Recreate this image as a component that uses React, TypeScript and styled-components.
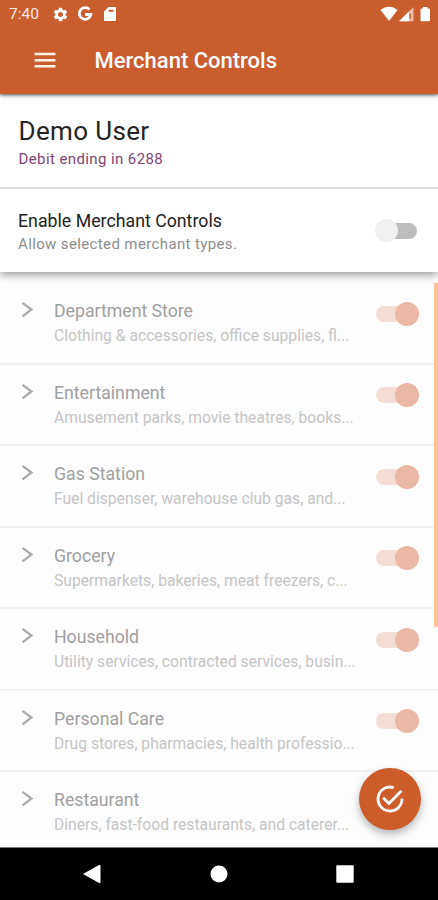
import React from "react";
import styled, { createGlobalStyle } from "styled-components";
import { MdSettings } from "react-icons/md";

const Global = createGlobalStyle`
  * { box-sizing: border-box; }
  body { margin: 0; background: #fff; font-family: Roboto, sans-serif; }
`;

const Screen = styled.div`
  position: relative;
  width: 438px;
  height: 900px;
  overflow: hidden;
  display: flex;
  flex-direction: column;
  background: #fdfdfd;
`;

const Header = styled.header`
  position: relative;
  z-index: 4;
  flex: none;
  height: 94px;
  background: #ca5d2d;
  color: #fff;
  box-shadow: 0 1px 3px rgba(0, 0, 0, 0.6), 0 3px 5px rgba(0, 0, 0, 0.12);
`;

const StatusBar = styled.div`
  display: flex;
  align-items: center;
  height: 28px;
  padding: 0 6px 0 9px;
`;

const Clock = styled.span`
  width: 42.5px;
  font-size: 15.5px;
  line-height: 28px;
  color: #fbe9e0;
`;

const StatusIcons = styled.div<{ $gap: number; $end?: boolean }>`
  display: flex;
  align-items: center;
  gap: ${(p) => p.$gap}px;
  margin-left: ${(p) => (p.$end ? "auto" : "0")};
  svg { display: block; }
`;

const AppBar = styled.div`
  display: flex;
  align-items: center;
  height: 66px;
  padding: 0 0 2px 34px;
`;

const MenuButton = styled.button`
  display: flex;
  width: 60.5px;
  padding: 0;
  border: 0;
  background: none;
`;

const Title = styled.h1`
  margin: 0;
  font-size: 22px;
  font-weight: 500;
  white-space: nowrap;
`;

const Account = styled.section`
  position: relative;
  z-index: 3;
  flex: none;
  height: 95px;
  padding: 21px 18.5px 0;
  background: #fff;
  border-bottom: 2px solid #dcdcdc;
`;

const UserName = styled.h2`
  margin: 0;
  font-size: 26px;
  font-weight: 400;
  line-height: 32px;
  letter-spacing: 0.35px;
  color: #242424;
`;

const CardInfo = styled.p`
  margin: 3px 0 0;
  font-size: 15px;
  line-height: 19px;
  letter-spacing: 0.4px;
  color: #7f4474;
`;

const Master = styled.section`
  position: relative;
  z-index: 2;
  flex: none;
  display: flex;
  justify-content: space-between;
  height: 82.5px;
  padding: 21px 19px 0 18px;
  background: #fff;
  box-shadow: 0 3px 8px rgba(0, 0, 0, 0.38);
`;

const MasterTitle = styled.div`
  font-size: 17.75px;
  line-height: 22px;
  color: #222;
`;

const MasterHint = styled.div`
  margin-top: 2px;
  font-size: 15px;
  line-height: 20px;
  letter-spacing: 0.37px;
  color: #8d8d8d;
`;

const Track = styled.span<{ $on: boolean }>`
  flex: none;
  display: flex;
  align-items: center;
  justify-content: ${(p) => (p.$on ? "flex-end" : "flex-start")};
  width: 41px;
  height: 16px;
  border-radius: 8px;
  background: ${(p) => (p.$on ? "#f3ddd4" : "#bdbdbd")};
`;

const Knob = styled.span<{ $on: boolean }>`
  flex: none;
  width: ${(p) => (p.$on ? 24 : 23)}px;
  height: ${(p) => (p.$on ? 24 : 23)}px;
  margin: 0 -2px 0 -1px;
  border-radius: 50%;
  background: ${(p) => (p.$on ? "#ebb8a7" : "#f0f0f0")};
`;

const MasterSwitch = styled.div`
  padding: 12.5px 2px 0 0;
`;

const List = styled.ul`
  flex: 1;
  min-height: 0;
  overflow: hidden;
  margin: 0;
  padding: 11.5px 0 0;
  list-style: none;
`;

const Row = styled.li`
  display: flex;
  height: 81.5px;
  padding: 17px 20px 0 21px;
  border-bottom: 2px solid #f0f0f0;
`;

const Chevron = styled.svg`
  display: block;
  flex: none;
  width: 33px;
  height: 20px;
`;

const RowText = styled.div`
  width: 322px;
  flex: none;
`;

const RowTitle = styled.div`
  font-size: 17.7px;
  line-height: 22px;
  color: #a0a0a0;
`;

const RowHint = styled.div`
  margin-top: 2.4px;
  font-size: 15.67px;
  line-height: 23px;
  white-space: nowrap;
  color: #c5c5c5;
`;

const RowSwitch = styled.div`
  padding-top: 5.6px;
`;

const ScrollThumb = styled.div`
  position: absolute;
  z-index: 1;
  top: 283px;
  right: 0;
  width: 4px;
  height: 344px;
  background: #fbc396;
`;

const Fab = styled.button`
  position: absolute;
  z-index: 3;
  left: 359px;
  top: 768px;
  display: flex;
  align-items: center;
  justify-content: center;
  width: 62px;
  height: 62px;
  padding: 0;
  border: 0;
  border-radius: 50%;
  background: #cc5c2a;
  box-shadow: 0 4px 7px rgba(0, 0, 0, 0.22), 0 5px 14px rgba(0, 0, 0, 0.08);
`;

const NavBar = styled.nav`
  position: relative;
  z-index: 4;
  flex: none;
  display: flex;
  align-items: center;
  justify-content: space-between;
  height: 53px;
  padding: 0 84px 1px 83px;
  background: #000;
  border-top: 1px solid #777;
`;

const merchants = [
  ["Department Store", "Clothing & accessories, office supplies, fl..."],
  ["Entertainment", "Amusement parks, movie theatres, books..."],
  ["Gas Station", "Fuel dispenser, warehouse club gas, and..."],
  ["Grocery", "Supermarkets, bakeries, meat freezers, c..."],
  ["Household", "Utility services, contracted services, busin..."],
  ["Personal Care", "Drug stores, pharmacies, health professio..."],
  ["Restaurant", "Diners, fast-food restaurants, and caterer..."],
];

function Toggle({ on }: { on: boolean }) {
  return (
    <Track $on={on} role="switch" aria-checked={on}>
      <Knob $on={on} />
    </Track>
  );
}

export default function App() {
  return (
    <>
      <Global />
      <Screen>
        <Header>
          <StatusBar>
            <Clock>7:40</Clock>
            <StatusIcons $gap={8.5}>
              <MdSettings size={17} />
              <svg width="16" height="16" viewBox="0 0 16 16" fill="none" stroke="#fff" strokeWidth="2.8">
                <path d="M12.4 3.6A5.800 5.800 0 1 0 13.800 8.500H8" />
              </svg>
              <svg width="15" height="16" viewBox="0 0 15 16">
                <path fill="#fff" fillRule="evenodd" d="M6.500 1H13q1 0 1 1v12q0 1-1 1H3q-1 0-1-1V5.500zM6.600 3.800v2h4.800v-2z" />
              </svg>
            </StatusIcons>
            <StatusIcons $gap={0} $end>
              <svg width="52" height="18" viewBox="0 0 52 18">
                <path fill="#fff" d="M.5 5C5.500.5 12.500.5 17.500 5L9 16z" />
                <path fill="#fff" d="M19 16.300 33.500 2v14.300z" fillOpacity=".6" />
                <path fill="#fff" d="M19 16.300 29 6.400v9.900z" />
                <path fill="#ca5d2d" d="M29.500 8.500h1.500v5h-1.500z" />
                <path fill="#fff" d="M43 2h4.500v1.500H49q1 0 1 1v10.800q0 1-1 1h-7.500q-1 0-1-1V4.500q0-1 1-1H43z" />
              </svg>
            </StatusIcons>
          </StatusBar>
          <AppBar>
            <MenuButton aria-label="Menu">
              <svg width="22" height="16" viewBox="0 0 22 16" fill="none" stroke="#fff1e4" strokeWidth="2.400">
                <path d="M.5 2h21M.5 8.300h21M.5 14.300h21" />
              </svg>
            </MenuButton>
            <Title>Merchant Controls</Title>
          </AppBar>
        </Header>

        <Account>
          <UserName>Demo User</UserName>
          <CardInfo>Debit ending in 6288</CardInfo>
        </Account>

        <Master>
          <div>
            <MasterTitle>Enable Merchant Controls</MasterTitle>
            <MasterHint>Allow selected merchant types.</MasterHint>
          </div>
          <MasterSwitch>
            <Toggle on={false} />
          </MasterSwitch>
        </Master>

        <List>
          {merchants.map(([name, hint]) => (
            <Row key={name}>
              <Chevron viewBox="0 0 33 20" fill="none" stroke="#aaa" strokeWidth="2.2">
                <path d="m1.500 2.800 9 6.700-9 6.800" />
              </Chevron>
              <RowText>
                <RowTitle>{name}</RowTitle>
                <RowHint>{hint}</RowHint>
              </RowText>
              <RowSwitch>
                <Toggle on />
              </RowSwitch>
            </Row>
          ))}
        </List>

        <NavBar>
          <svg width="18" height="20" viewBox="0 0 18 20">
            <path fill="#fff" d="M0 10 16 1q1.500-.5 1.500 1v16q0 1.500-1.500 1z" />
          </svg>
          <svg width="18" height="18" viewBox="0 0 18 18">
            <circle cx="9" cy="9" r="8.500" fill="#fff" />
          </svg>
          <svg width="18" height="18" viewBox="0 0 18 18">
            <rect x=".3" y=".3" width="17.400" height="17.400" rx="1" fill="#fff" />
          </svg>
        </NavBar>

        <ScrollThumb />
        <Fab aria-label="Save">
          <svg width="30" height="30" viewBox="0 0 30 30" fill="none" stroke="#fff" strokeWidth="2.800">
            <path d="M18.700 3.600A12 12 0 1 0 27 14.600" />
            <path d="m8.200 13.800 5.700 5.700L26.500 6.800" />
          </svg>
        </Fab>
      </Screen>
    </>
  );
}
